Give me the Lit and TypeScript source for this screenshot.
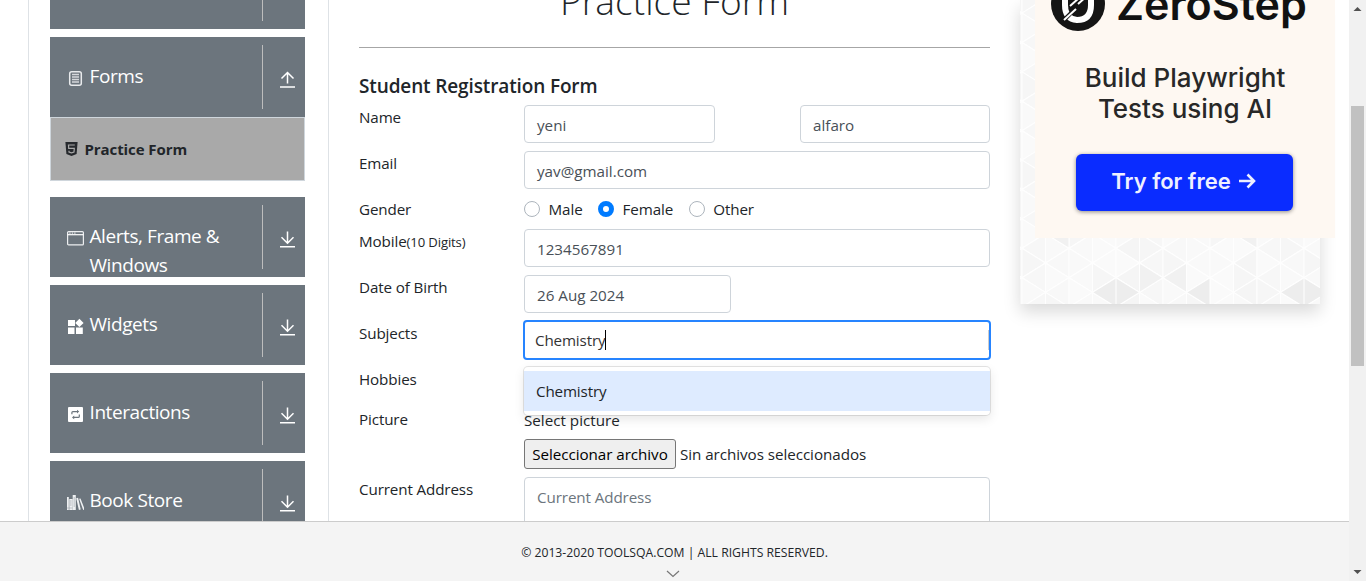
import { LitElement, html, css, svg } from "lit";
import { customElement } from "lit/decorators.js";

const icons: Record<string, unknown> = {
  form: svg`<rect x="2.700" y="1.700" width="11.600" height="13.600" rx="2" fill="none" stroke="#e8eaec" stroke-width="1.500"/><path d="M5 4.500h7M5 7h7M5 9.500h7M5 12h7" stroke="#d5d8db" stroke-width="1.300"/>`,
  window: svg`<rect x=".6" y="1.600" width="15.800" height="13.300" rx="1" fill="none" stroke="#eceef0" stroke-width="1.200"/><path d="M.6 4.700h15.800" stroke="#fff" stroke-width="1.200"/><path d="M2.300 3.100h1.300M4.800 3.100h1.300M7.200 3.100h1.300" stroke="#fff"/>`,
  widgets: svg`<path d="M1 2h7v6H1zM1 9.500h6.500V16H1zM9 9.500h6.800V16H9zM12.400.700l4.200 4.200-4.200 4.200-4.200-4.200z" fill="#fff"/>`,
  repeat: svg`<rect x="1" y="1" width="15" height="15" rx="1" fill="#fff"/><path d="M4.900 8.300V6.600q0-1 1-1h4.800M12.300 8.500v1.900q0 1-1 1H6.500" fill="none" stroke="#6c757d" stroke-width="1.200"/><path d="M10 3.700l2.200 1.900L10 7.500zM7.200 9.500L5 11.400l2.200 1.900z" fill="#6c757d"/>`,
  books: svg`<path d="M0 3h1.800v13H0zM2.300 5h3.200v11H2.300zM5.700 1h3.100v15H5.700zM9.200 4.300l1.900-.500 2.600 11.800-1.800.400zM12.100 4.800l1.400-.400 4.200 11-1.500.500z" fill="#eef0f2"/><path d="M0 14h5.500M3.900 6v6M7.200 3v10" stroke="#9aa1a7" stroke-width=".6"/>`,
};

interface Group {
  icon: string;
  label: string;
  open?: boolean;
}

const groups: Group[] = [
  { icon: "form", label: "Forms", open: true },
  { icon: "window", label: "Alerts, Frame & Windows" },
  { icon: "widgets", label: "Widgets" },
  { icon: "repeat", label: "Interactions" },
  { icon: "books", label: "Book Store" },
];

@customElement("side-menu")
export class SideMenu extends LitElement {
  static styles = css`
    :host { display: block; box-sizing: border-box; width: 301px; padding: 0 23px 0 21px; border: solid #dee2e6; border-width: 0 1px; }
    .head { box-sizing: border-box; height: 80px; margin-bottom: 8px; background: #6c757d; color: #fff; display: flex; padding: 8px 10px 8px 17px; overflow: hidden; }
    .top { height: 29px; padding-top: 0; }
    .top .bar { height: 21px; }
    .icon { flex: none; width: 17px; height: 17px; margin-top: 25px; }
    .label { flex: 1; margin: 17px 0 0 5.500px; font-size: 19px; line-height: 29px; letter-spacing: -0.420px; }
    .bar { width: 1px; height: 64px; background: #bdbdbd; margin-right: 17px; }
    .arrow { flex: none; width: 15px; height: 17px; margin-top: 26px; }
    .open { margin-bottom: 0; }
    .item { box-sizing: border-box; height: 64px; margin-bottom: 16px; border: 1px solid #cfd6dc; background: #a9a9a9; display: flex; align-items: center; padding: 0 0 0 14px; gap: 6.500px; font-size: 15px; font-weight: 700; color: #212529; letter-spacing: -0.080px; }
    .badge { width: 13px; height: 14px; margin-bottom: 1px; }
  `;

  render() {
    return html`
      <div class="head top"><span class="label"></span><span class="bar"></span><span class="arrow"></span></div>
      ${groups.map((g) => html`
        <div class="head ${g.open ? "open" : ""}">
          <svg class="icon" viewBox="0 0 17 17">${icons[g.icon]}</svg>
          <span class="label">${g.label}</span>
          <span class="bar"></span>
          <svg class="arrow" viewBox="0 0 15 17" fill="none" stroke="#fff" stroke-width="1.500">
            ${g.open ? svg`<path d="M7.500 12.500V2M1.500 7.500l6-6 6 6M0 16h15"/>` : svg`<path d="M7.500 .500V12M1.500 6.300l6 6 6-6M0 15.700h15"/>`}
          </svg>
        </div>
        ${g.open ? html`<div class="item">
          <svg class="badge" viewBox="0 0 13 14"><path d="M.4 0h12.200l-1 12L6.500 14l-5.100-2z" fill="#26292d"/><path d="M9.800 3H3.500l.2 3.400h5.600L9 10l-2.500.800L4 10V8.700" fill="none" stroke="#a9a9a9" stroke-width="1.200"/></svg>
          <span>Practice Form</span></div>` : ""}
      `)}
    `;
  }
}

@customElement("practice-form")
export class PracticeForm extends LitElement {
  static styles = css`
    :host { display: flow-root; width: 631px; margin: 0 30px; color: #212529; font-size: 15.200px; line-height: 24px; }
    h1, h5 { margin: 0; }
    h1 { display: flow-root; box-sizing: border-box; height: 48px; border-bottom: 1px solid #a6a6a6; font: 300 37.200px/48px "Open Sans Light", "Open Sans", sans-serif; text-align: center; }
    h1 span { display: block; margin-top: -23px; }
    h5 { font-size: 19px; line-height: 24px; font-weight: 600; margin: 26px 0 7px; letter-spacing: -0.130px; }
    .row { display: flex; height: 38px; margin-bottom: 8px; }
    .short { height: 24px; }
    .hobby { height: 32px; }
    .picture { height: 62px; }
    .key { width: 165px; flex: none; letter-spacing: -0.120px; }
    small { font-size: 13.100px; }
    .box { box-sizing: border-box; height: 38px; flex: 1; border: 1px solid #ced4da; border-radius: 4px; padding: 7px 12px; color: #495057; background: #fff; }
    .pair { display: flex; flex: 1; justify-content: space-between; }
    .pair .first { flex: none; width: 191px; }
    .pair .last { flex: none; width: 190px; }
    .box.date { flex: none; width: 207px; }
    .area { height: 80px; color: #6c757d; letter-spacing: -0.100px; }
    .radios { display: flex; gap: 15.500px; }
    .radio { display: flex; gap: 8.500px; letter-spacing: -0.100px; }
    .dot { box-sizing: border-box; width: 16px; height: 16px; margin-top: 4px; border: 1px solid #adb5bd; border-radius: 50%; background: #fff; }
    .on { border: 5px solid #007bff; }
    .focus { position: relative; margin: -1px; height: 40px; border: 2px solid #2684ff; padding: 6px 10px; color: #333; display: flex; letter-spacing: -0.150px; }
    .caret { width: 1px; height: 20px; margin-top: 2px; background: #000; }
    .edge { width: 1px; height: 20px; margin: 2px -10px 0 auto; background: #ccc; }
    .menu { position: absolute; top: 45px; left: -1px; right: -1px; box-sizing: border-box; height: 48px; padding: 4px 0; background: #fff; border-radius: 4px; box-shadow: 0 0 0 1px rgba(0, 0, 0, 0.100), 0 4px 11px rgba(0, 0, 0, 0.100); z-index: 2; color: #212529; }
    .option { height: 40px; line-height: 40px; background: #deebff; padding-left: 12px; }
    .upload { display: flex; align-items: center; gap: 4px; margin-top: 7px; letter-spacing: -0.050px; }
    .select { margin-top: 1px; }
    .choose { box-sizing: border-box; width: 152px; height: 30px; border: 1px solid #767676; border-radius: 3px; background: #efefef; color: #000; font: inherit; letter-spacing: -0.050px; padding: 0; white-space: nowrap; }
  `;

  render() {
    return html`
      <h1><span>Practice Form</span></h1>
      <h5>Student Registration Form</h5>
      <div class="row"><span class="key">Name</span><div class="pair"><div class="box first">yeni</div><div class="box last">alfaro</div></div></div>
      <div class="row"><span class="key">Email</span><div class="box">yav@gmail.com</div></div>
      <div class="row short"><span class="key">Gender</span><div class="radios">
        ${["Male", "Female", "Other"].map((g) => html`<div class="radio"><span class="dot ${g === "Female" ? "on" : ""}"></span><span>${g}</span></div>`)}
      </div></div>
      <div class="row"><span class="key">Mobile<small>(10 Digits)</small></span><div class="box">1234567891</div></div>
      <div class="row"><span class="key">Date of Birth</span><div class="box date">26 Aug 2024</div></div>
      <div class="row"><span class="key">Subjects</span><div class="box focus"><span>Chemistry</span><span class="caret"></span><span class="edge"></span>
        <div class="menu"><div class="option">Chemistry</div></div></div></div>
      <div class="row hobby"><span class="key">Hobbies</span></div>
      <div class="row picture"><span class="key">Picture</span><div><div class="select">Select picture</div>
        <div class="upload"><button class="choose">Seleccionar archivo</button><span>Sin archivos seleccionados</span></div></div></div>
      <div class="row"><span class="key">Current Address</span><div class="box area">Current Address</div></div>
    `;
  }
}

@customElement("promo-card")
export class PromoCard extends LitElement {
  static styles = css`
    :host { display: block; box-sizing: border-box; width: 300px; height: 304px; padding-left: 15px; box-shadow: 0 8px 16px rgba(0, 0, 0, 0.150); position: relative; }
    .pattern { position: absolute; inset: 0; width: 300px; height: 304px; }
    .ad { position: relative; box-sizing: border-box; width: 300px; height: 238px; background: #fef8f2; overflow: hidden; display: flex; flex-direction: column; align-items: center; color: #282828; font-family: Inter, sans-serif; }
    .brand { box-sizing: border-box; display: flex; width: 300px; height: 62px; padding-left: 16px; gap: 11px; flex: none; font-size: 43px; line-height: 48px; font-weight: 600; color: #111; }
    .brand span { margin-top: -20px; }
    .mark { width: 54px; height: 54px; margin-top: -23px; flex: none; }
    .copy { text-align: center; font-size: 26px; line-height: 31px; font-weight: 500; }
    .cta { box-sizing: border-box; width: 217px; height: 57px; margin: 30px 1px 0 0; padding: 0 2px 4px 0; background: #0a2cff; border-radius: 6px; box-shadow: 0 1px 4px rgba(0, 0, 0, 0.450); color: #eef0ff; font-size: 22px; line-height: 54px; font-weight: 600; display: flex; flex: none; align-items: center; justify-content: center; gap: 7px; }
    .go { width: 18px; height: 16px; }
  `;

  render() {
    const tiles = [];
    const w = 23.5;
    const h = 29.4;
    for (let c = -1; c < 13; c++) {
      for (let r = -1; r < 11; r++) {
        const x = c * w + 2;
        const y = r * h + (c % 2 ? 27.8 : 13.1);
        const t = c * 7 + r * 5 + 35;
        const left = ["#f7f7f7", "#fafafa", "#f8f8f8", "#f5f5f5", "#f9f9f9"][t % 5];
        const right = ["#f6f6f6", "#fafafa", "#f9f9f9"][t % 3];
        tiles.push(svg`<path d="M${x} ${y}l${w} ${-h / 2}v${h}z" fill=${left}/><path d="M${x} ${y}l${w} ${h / 2}l${-w} ${h / 2}z" fill=${right}/>`);
      }
    }
    return html`
      <svg class="pattern" viewBox="0 0 300 304">
        <rect width="300" height="304" fill="#fafafa"/>
        <g stroke="#fefefe" stroke-width="1.100">${tiles}
        <path d="M72.500 292.400L96 277.700l23.500 14.700L96 307zM166.500 292.400l23.500-14.700V307zM260.500 292.400l23.500-14.700 23.500 14.700L284 307z" fill="#ededed"/>
        <path d="M119.500 263v29.400L143 277.700zM143 277.700l23.500-14.700v29.400zM25.500 233.600L49 248.300v-29.400zM213.500 233.600l23.500 14.700v-29.400z" fill="#f1f1f1"/>
        <path d="M96 277v27M284 277v27"/></g>
      </svg>
      <div class="ad">
        <div class="brand">
          <svg class="mark" viewBox="0 0 54 54"><circle cx="27" cy="27" r="27" fill="#151515"/><path d="M14 12v16q0 14 12 15 14 0 14-15V12" fill="none" stroke="#fff" stroke-width="6"/><path d="M12 44L34 22M25 27l10-10M19 33l12-12" stroke="#151515" stroke-width="4"/><path d="M13 43l12-11M19 29l9-8M27 27l9-8" stroke="#fff" stroke-width="2"/></svg>
          <span>ZeroStep</span>
        </div>
        <div class="copy">Build Playwright<br>Tests using AI</div>
        <div class="cta"><span>Try for free</span><svg class="go" viewBox="0 0 18 16" fill="none" stroke="#eef0ff" stroke-width="2.600"><path d="M1 8h15M9.500 1.500L16 8l-6.500 6.500"/></svg></div>
      </div>
    `;
  }
}

@customElement("app-root")
export class AppRoot extends LitElement {
  static styles = css`
    :host { display: grid; grid-template: 521px 60px / 1349px 17px; height: 581px; width: 1366px; overflow: hidden; background: #fff; font-family: "Open Sans", sans-serif; color: #212529; }
    .page { display: flex; overflow: hidden; padding-left: 28px; align-items: flex-start; }
    footer { grid-row: 2; grid-column: 1; box-sizing: border-box; border-top: 1px solid #ccc; background: #f4f4f4; display: flex; flex-direction: column; align-items: center; padding-top: 21px; font-size: 12.200px; line-height: 20px; }
    .copyright { white-space: nowrap; }
    .chevron { width: 14px; height: 8px; margin: 7px 3px 0 0; flex: none; }
    .scroll { grid-column: 2; grid-row: 1 / 3; background: #f1f1f1; display: flex; flex-direction: column; align-items: center; }
    .tip { width: 17px; height: 17px; flex: none; }
    .thumb { width: 13px; height: 260px; margin: 89px 0 auto; background: #c1c1c1; }
  `;

  render() {
    return html`
      <div class="page"><side-menu></side-menu><practice-form></practice-form><promo-card></promo-card></div>
      <footer><span class="copyright">© 2013-2020 TOOLSQA.COM | ALL RIGHTS RESERVED.</span>
        <svg class="chevron" viewBox="0 0 14 8"><path d="M1 1l6 5.500L13 1" fill="none" stroke="#777" stroke-width="1.200"/></svg></footer>
      <div class="scroll">
        <svg class="tip" viewBox="0 0 17 17"><path d="M4.500 11L8.500 7l4 4z" fill="#505050"/></svg>
        <div class="thumb"></div>
        <svg class="tip" viewBox="0 0 17 17"><path d="M4.500 6l4 4 4-4z" fill="#505050"/></svg>
      </div>
    `;
  }
}
